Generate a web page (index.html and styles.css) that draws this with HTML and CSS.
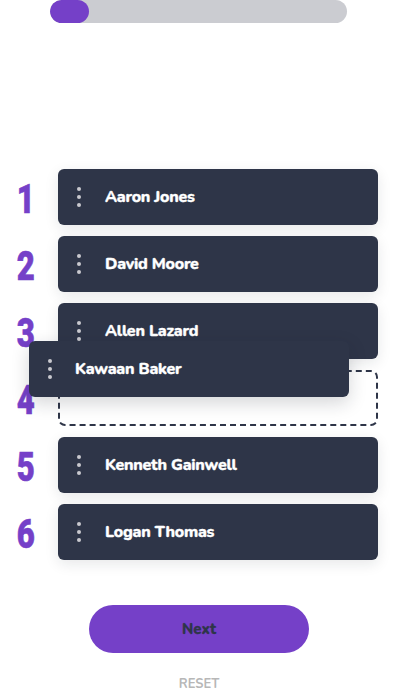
FILE: index.html
```html
<!DOCTYPE html>
<html>
<head>
<meta charset="utf-8">
<link rel="stylesheet" href="styles.css">
</head>
<body>
<div class="page">
  <div class="progress"><div class="progress-fill"></div></div>
  <ol class="ranking">
    <li class="row"><span class="num">1</span><div class="card"><span class="grip"><i></i><i></i><i></i></span><span class="name">Aaron Jones</span></div></li>
    <li class="row"><span class="num">2</span><div class="card"><span class="grip"><i></i><i></i><i></i></span><span class="name">David Moore</span></div></li>
    <li class="row"><span class="num">3</span><div class="card"><span class="grip"><i></i><i></i><i></i></span><span class="name">Allen Lazard</span></div></li>
    <li class="row"><span class="num">4</span><div class="slot"></div>
      <div class="card dragging"><span class="grip"><i></i><i></i><i></i></span><span class="name">Kawaan Baker</span></div>
    </li>
    <li class="row"><span class="num">5</span><div class="card"><span class="grip"><i></i><i></i><i></i></span><span class="name">Kenneth Gainwell</span></div></li>
    <li class="row"><span class="num">6</span><div class="card"><span class="grip"><i></i><i></i><i></i></span><span class="name">Logan Thomas</span></div></li>
  </ol>
  <div class="actions">
    <button class="next">Next</button>
    <button class="reset">RESET</button>
  </div>
</div>
</body>
</html>
```
FILE: styles.css
```css
html, body {
  margin: 0;
  padding: 0;
  background: #ffffff;
}
.page {
  width: 407px;
  height: 694px;
  overflow: hidden;
  font-family: "Nunito", "Lato", "Noto Sans", sans-serif;
}
.progress {
  margin-left: 50px;
  width: 297px;
  height: 23px;
  border-radius: 12px;
  background: #cbccd1;
  overflow: hidden;
}
.progress-fill {
  width: 39px;
  height: 100%;
  border-radius: 12px;
  background: #7540c8;
}
.ranking {
  list-style: none;
  margin: 146px 0 0 0;
  padding: 0;
  display: flex;
  flex-direction: column;
  gap: 11px;
}
.row {
  position: relative;
  display: flex;
  align-items: center;
  height: 56px;
}
.num {
  width: 76px;
  margin-right: -18px;
  padding-left: 22px;
  box-sizing: border-box;
  font-family: "Roboto", "DejaVu Sans", sans-serif;
  font-weight: 900;
  font-size: 41px;
  line-height: 1;
  color: #7540c8;
  transform: scaleX(0.76);
  transform-origin: left center;
  padding-top: 5px;
  -webkit-text-stroke: 0.6px #7540c8;
}
.card {
  width: 320px;
  height: 56px;
  box-sizing: border-box;
  background: #2e3548;
  border-radius: 6px;
  display: flex;
  align-items: center;
  box-shadow: 0 4px 14px rgba(20, 25, 40, 0.10);
}
.grip {
  width: 42px;
  display: flex;
  flex-direction: column;
  align-items: center;
  gap: 3.4px;
}
.grip i {
  display: block;
  width: 4.6px;
  height: 4.6px;
  border-radius: 50%;
  background: #c9c9cf;
}
.name {
  margin-left: 5px;
  color: #ffffff;
  font-weight: 800;
  font-size: 16px;
  letter-spacing: -0.25px;
  -webkit-text-stroke: 0.35px #ffffff;
}
.slot {
  width: 320px;
  height: 56px;
  box-sizing: border-box;
  border: 2px dashed #2e3548;
  border-radius: 7px;
}
.dragging {
  position: absolute;
  left: 29px;
  top: -29px;
  box-shadow: 0 6px 18px rgba(20, 25, 40, 0.18);
}
.dragging .name {
  margin-left: 4px;
}
.actions {
  display: flex;
  flex-direction: column;
  align-items: center;
  margin-top: 45px;
}
.next {
  width: 220px;
  height: 48px;
  border: none;
  border-radius: 24px;
  background: #7540c8;
  color: #2e3548;
  font-family: "Nunito", "Lato", sans-serif;
  font-weight: 800;
  font-size: 15px;
  margin-left: -9px;
  -webkit-text-stroke: 0.3px #2e3548;
}
.reset {
  margin-top: 22px;
  margin-left: -9px;
  border: none;
  background: none;
  padding: 0;
  color: #b7b7b7;
  font-family: "Nunito", "Lato", sans-serif;
  font-weight: 700;
  font-size: 13px;
}
```
